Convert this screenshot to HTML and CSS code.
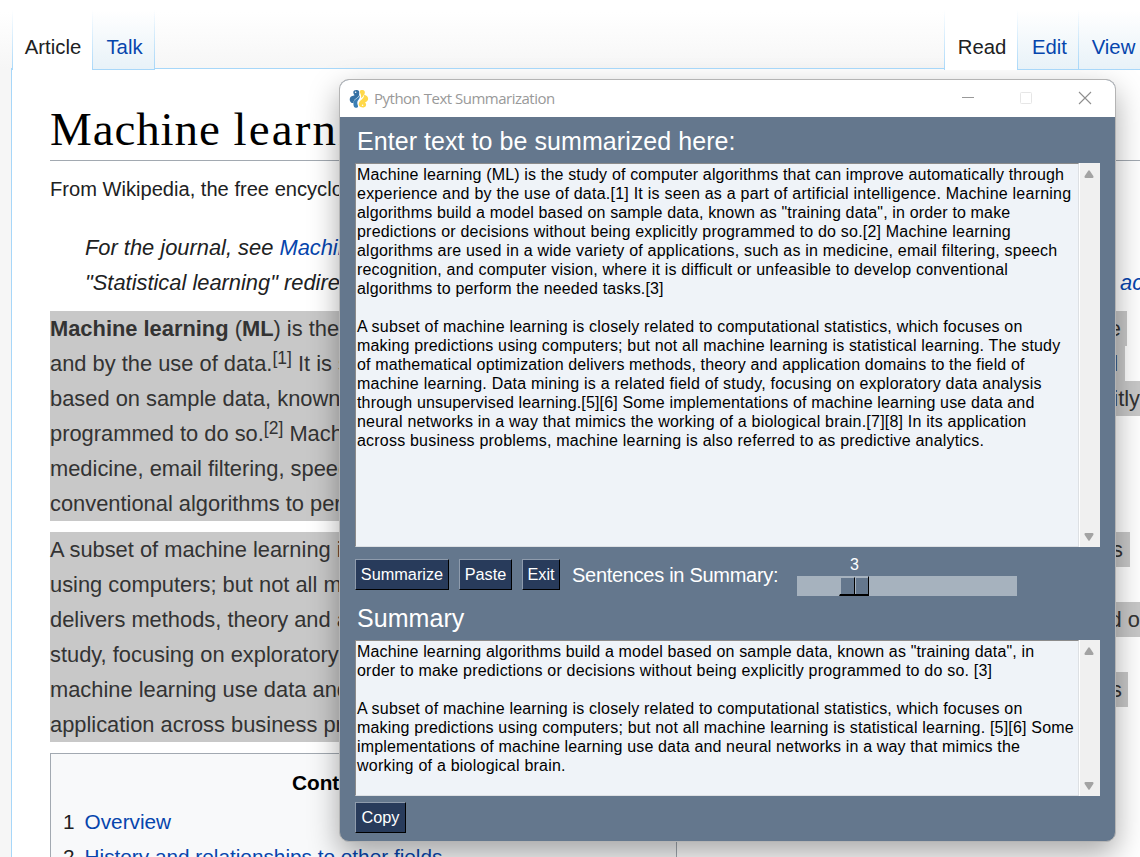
FILE: index.html
```html
<!DOCTYPE html>
<html lang="en">
<head>
<meta charset="utf-8">
<title>Python Text Summarization</title>
<link rel="stylesheet" href="styles.css">
</head>
<body>
<div class="wiki">
  <header class="head">
    <nav class="tabs left">
      <a class="tab active article">Article</a><a class="tab talk">Talk</a>
    </nav>
    <nav class="tabs right">
      <a class="tab active read">Read</a><a class="tab edit">Edit</a><a class="tab view">View</a>
    </nav>
  </header>
  <main class="content">
    <h1 class="title">Machine <span>learning</span></h1>
    <p class="from">From Wikipedia, the free encyclopedia</p>
    <div class="hatnote">
      <div class="row"><span>For the journal, see <a>Machine</a></span></div>
      <div class="row"><span>"Statistical learning" redirects</span><a class="tail-ac">ac</a></div>
    </div>
    <div class="para first">
      <div class="row sel e1"><span><b>Machine learning</b> (<b>ML</b>) is the</span><span>e</span></div>
      <div class="row sel e2"><span>and by the use of data.<sup>[1]</sup> It is s</span><span>l</span></div>
      <div class="row sel full"><span>based on sample data, known</span><span class="itly">itly</span></div>
      <div class="row sel half"><span>programmed to do so.<sup>[2]</sup> Mach</span></div>
      <div class="row sel half"><span>medicine, email filtering, speec</span></div>
      <div class="row sel half"><span>conventional algorithms to perf</span></div>
    </div>
    <div class="para second">
      <div class="row sel e3"><span>A subset of machine learning is</span><span>s</span></div>
      <div class="row sel half"><span>using computers; but not all ma</span></div>
      <div class="row sel full"><span>delivers methods, theory and a</span><span class="do">d o</span></div>
      <div class="row sel half"><span>study, focusing on exploratory</span></div>
      <div class="row sel e4"><span>machine learning use data and</span><span>s</span></div>
      <div class="row sel half"><span>application across business pr</span></div>
    </div>
    <section class="toc">
      <h2>Contents</h2>
      <div class="item"><span>1</span><a>Overview</a></div>
      <div class="item"><span>2</span><a>History and relationships to other fields</a></div>
    </section>
  </main>
</div>

<div class="window">
  <div class="titlebar">
    <svg class="logo" viewBox="0 0 20 20" width="20" height="20">
      <path d="M8.8 1.2c-2.600-.6-4.500.3-4.500 2.100 0 1.200.6 2.200 1.300 3L2 7.400C.3 8.800.3 11.700 1.800 13.200c1 1 2.300 1 2.800.5 0-2 .8-3.100 2.400-4.200C9 8.200 10.200 7.200 10.200 5V3c0-.9-.5-1.500-1.400-1.800z" fill="#3470a3"/>
      <path d="M4.400 14.400c0-2 .9-3.300 2.600-4.400 1.800-1.200 3-2.300 3.600-4 .4 1.600.3 3-.7 4.300-.8 1.100-1.600 2-1.600 3.600 0 1.500.8 2.500.8 3.500-.2 1.300-1.900 1.700-3.200 1.100-1.100-.6-1.500-2-1.500-4.100z" fill="#3b7fb5"/>
      <path d="M11.200 1.500c1.600-.9 3.800-.5 4.400.8.6 1.200.1 2.500-.4 3.600 2 .1 3.700 1.200 3.900 3.300.2 2-1 3.500-3 4.100.9 1.200 1.400 2.500.7 3.700-.9 1.500-3.300 1.900-5.100 1-1.500-.8-2.200-2-1.900-3.600.3-1.900 1.700-3 3.200-4.200 1.700-1.300 2.300-2.700 1.900-4.600-.5 1.800-1.500 2.700-2.900 3.600.3-1.600.1-3-.6-4.600-.5-1.300-.8-2.300-.2-3.100z" fill="#ffd84a"/>
      <circle cx="6.600" cy="3.200" r=".8" fill="#fff"/><circle cx="13.600" cy="16.300" r=".8" fill="#fff"/>
    </svg>
    <span class="caption">Python Text Summarization</span>
    <svg class="controls" viewBox="0 0 130 15" width="130" height="15">
      <path d="M0 6.500h12" stroke="#999" fill="none"/>
      <rect x="58.500" y="1.500" width="11" height="11" rx="1" stroke="#e6e6e6" fill="none"/>
      <path d="M117 1l12 12M129 1l-12 12" stroke="#8e8e8e" fill="none" stroke-width="1.100"/>
    </svg>
  </div>
  <div class="client">
    <div class="label big">Enter text to be summarized here:</div>
    <div class="box input">
      <div class="text">
        <div class="l1">Machine learning (ML) is the study of computer algorithms that can improve automatically through</div>
        <div class="l2">experience and by the use of data.[1] It is seen as a part of artificial intelligence. Machine learning</div>
        <div class="l3">algorithms build a model based on sample data, known as "training data", in order to make</div>
        <div class="l4">predictions or decisions without being explicitly programmed to do so.[2] Machine learning</div>
        <div class="l5">algorithms are used in a wide variety of applications, such as in medicine, email filtering, speech</div>
        <div class="l6">recognition, and computer vision, where it is difficult or unfeasible to develop conventional</div>
        <div class="l7">algorithms to perform the needed tasks.[3]</div>
        <div>&nbsp;</div>
        <div class="l8">A subset of machine learning is closely related to computational statistics, which focuses on</div>
        <div class="l9">making predictions using computers; but not all machine learning is statistical learning. The study</div>
        <div class="l10">of mathematical optimization delivers methods, theory and application domains to the field of</div>
        <div class="l11">machine learning. Data mining is a related field of study, focusing on exploratory data analysis</div>
        <div class="l12">through unsupervised learning.[5][6] Some implementations of machine learning use data and</div>
        <div class="l13">neural networks in a way that mimics the working of a biological brain.[7][8] In its application</div>
        <div class="l14">across business problems, machine learning is also referred to as predictive analytics.</div>
      </div>
      <div class="scroll">
        <svg width="10" height="8" viewBox="0 0 10 7" preserveAspectRatio="none"><path d="M4.200.7Q5-.2 5.800.7L9.300 5.200Q10 7 8.500 7H1.500Q0 7 .7 5.200Z" fill="#a3a3a3"/></svg>
        <svg width="10" height="8" viewBox="0 0 10 7" preserveAspectRatio="none"><path d="M4.200 6.300Q5 7.200 5.800 6.300L9.300 1.800Q10 0 8.500 0H1.500Q0 0 .7 1.800Z" fill="#a3a3a3"/></svg>
      </div>
    </div>
    <div class="tools">
      <button class="btn summarize">Summarize</button>
      <button class="btn paste">Paste</button>
      <button class="btn exit">Exit</button>
      <span class="sentences">Sentences in Summary:</span>
      <div class="slider">
        <div class="value">3</div>
        <div class="track"><div class="thumb"><i></i><i></i></div></div>
      </div>
    </div>
    <div class="label big summary">Summary</div>
    <div class="box output">
      <div class="text">
        <div class="s1">Machine learning algorithms build a model based on sample data, known as "training data", in</div>
        <div class="s2">order to make predictions or decisions without being explicitly programmed to do so. [3]</div>
        <div>&nbsp;</div>
        <div class="s3">A subset of machine learning is closely related to computational statistics, which focuses on</div>
        <div class="s4">making predictions using computers; but not all machine learning is statistical learning. [5][6] Some</div>
        <div class="s5">implementations of machine learning use data and neural networks in a way that mimics the</div>
        <div class="s6">working of a biological brain.</div>
      </div>
      <div class="scroll">
        <svg width="10" height="8" viewBox="0 0 10 7" preserveAspectRatio="none"><path d="M4.200.7Q5-.2 5.800.7L9.300 5.200Q10 7 8.500 7H1.500Q0 7 .7 5.200Z" fill="#a3a3a3"/></svg>
        <svg width="10" height="8" viewBox="0 0 10 7" preserveAspectRatio="none"><path d="M4.200 6.300Q5 7.200 5.800 6.300L9.300 1.800Q10 0 8.500 0H1.500Q0 0 .7 1.800Z" fill="#a3a3a3"/></svg>
      </div>
    </div>
    <button class="btn copy">Copy</button>
  </div>
</div>
</body>
</html>
```
FILE: styles.css
```css
* { box-sizing: border-box; }
html, body { margin: 0; height: 857px; overflow: hidden; }
body { width: 1140px; position: relative; font-family: "Liberation Sans", Arial, sans-serif; color: #202122; }
a { color: #0645ad; }

.wiki { height: 857px; display: flex; flex-direction: column; padding-left: 11px; overflow: hidden;
  background: linear-gradient(#fff 0, #fff 12px, #f6f6f6 69px); white-space: nowrap; }
.head { flex: none; height: 69px; display: flex; justify-content: space-between; border-bottom: 1px solid #a7d7f9; position: relative; z-index: 1; }
.tabs { display: flex; height: 70px; }
.left { padding-left: 1px; }
.tab { font-size: 20.310px; line-height: 24px; padding-top: 35px; text-align: center; color: #0645ad;
  border-right: 1px solid; border-bottom: 1px solid #a7d7f9;
  border-image: linear-gradient(rgba(167,215,249,0) 15%, #a7d7f9) 1;
  background: linear-gradient(#fff 15%, #e8f2f8); }
.tab.active { background: #fff; color: #202122; border-bottom: 0; }
.article { width: 81px; border-left: 1px solid; padding-left: 1px; }
.talk { width: 62px; padding-left: 2px; }
.read { width: 74px; border-left: 1px solid; padding-left: 2px; }
.edit { width: 61px; padding-left: 3px; }
.view { width: 61px; padding-left: 8px; border-right: 0; }

.content { flex: 1; background: #fff; border-left: 1px solid #a7d7f9; padding: 34px 0 0 38px; overflow: hidden; }
.title { margin: 0; height: 58px; border-bottom: 1px solid #a2a9b1; font: 400 47px/52px "Liberation Serif", serif; color: #000; letter-spacing: .9px; }
.title span { letter-spacing: 2.200px; }
.from { margin: 16px 0 0; font-size: 20.125px; line-height: 24px; }
.hatnote { margin-top: 29px; padding-left: 35px; font-style: italic; }
.tail-ac { width: 20px; }
.row { height: 35px; font-size: 21.875px; line-height: 35px; display: flex; justify-content: space-between; }
.para.first { margin-top: 11px; }
.para.second { margin-top: 11px; }
.sel { background: #c8c8c8; color: #333; }
.row sup { font-size: 17.500px; line-height: 1; vertical-align: 7px; }
.e1 { width: 1077px; padding-right: 6px; }
.e2 { width: 1075px; padding-right: 7px; }
.e3 { width: 1080px; padding-right: 7px; }
.e4 { width: 1078px; padding-right: 6px; }
.half { width: 900px; }
.toc { width: 627px; height: 300px; margin-top: 11px; border: 1px solid #a2a9b1; background: #f8f9fa; padding: 12px 12px; font-size: 20.780px; }
.toc h2 { margin: 0; padding-right: 53px; font-size: 20.780px; line-height: 33px; text-align: center; color: #000; }
.item { display: flex; gap: 10px; line-height: 35px; margin-top: 5px; }
.item + .item { margin-top: 0; }

.window { position: absolute; left: 339px; top: 79px; width: 777px; height: 763px; border: 1px solid #b4b4b4; border-radius: 10px;
  overflow: hidden; background: #64778d; background-clip: border-box; box-shadow: 0 12px 30px rgba(0,0,0,.34); display: flex; flex-direction: column; white-space: nowrap; }
.titlebar { flex: none; height: 37px; background: #fff; display: flex; align-items: center; padding: 0 23px 0 9px; }
.caption { font: 15px/20px "Open Sans", sans-serif; color: #999; margin: -2px 0 0 5px; flex: 1; letter-spacing: -.5px; }
.client { flex: 1; padding: 7px 15px 0; color: #fff; display: flex; flex-direction: column; align-items: flex-start; }
.label { font-size: 25px; line-height: 34px; height: 39px; padding-left: 2px; letter-spacing: .06px; }
.box { width: 745px; display: flex; background: #f0f0f0; }
.input { height: 384px; }
.text { width: 724px; background: #eff3f8; color: #000; font-size: 16px; line-height: 19px; padding: 1px 0 0 1px;
  border: 1px solid; border-color: #8b8b8b #dde0e4 #dde0e4 #8b8b8b; }
.l1 { letter-spacing: .168px; }
.l2 { letter-spacing: .235px; }
.l3 { letter-spacing: .148px; }
.l4 { letter-spacing: .2px; }
.l5 { letter-spacing: .212px; }
.l6 { letter-spacing: .185px; }
.l7 { letter-spacing: .167px; }
.l8, .s3 { letter-spacing: .194px; }
.l9 { letter-spacing: .172px; }
.l10 { letter-spacing: .14px; }
.l11 { letter-spacing: .216px; }
.l12 { letter-spacing: .155px; }
.l13 { letter-spacing: .21px; }
.l14 { letter-spacing: .207px; }
.s1 { letter-spacing: .152px; }
.s2 { letter-spacing: .205px; }
.s4 { letter-spacing: .185px; }
.s5 { letter-spacing: .145px; }
.s6 { letter-spacing: .23px; }
.scroll { flex: 1; border-left: 1px solid #fff; display: flex; flex-direction: column; align-items: center; justify-content: space-between; padding: 7px 2px 6px 0; }
.tools { display: flex; height: 58px; align-items: flex-start; padding-top: 12px; }
.btn { height: 31px; padding: 0 0 1px; border: 1px solid; border-color: #8e9bac #000 #000 #8e9bac; background: #283b5b; color: #fff;
  font: 16.300px/27px "Liberation Sans", Arial, sans-serif; text-align: center; }
.summarize { width: 94px; margin-right: 10px; }
.paste { width: 53px; margin-right: 10px; }
.exit { width: 38px; margin-right: 12px; }
.sentences { font-size: 20px; line-height: 32px; width: 225px; letter-spacing: -.29px; }
.slider { width: 220px; margin-top: -5px; }
.value { font-size: 16px; line-height: 21px; height: 22px; padding-left: 53px; }
.track { height: 20px; background: #a6b2be; padding-left: 42px; }
.thumb { width: 30px; height: 20px; display: flex; border: 1px solid; border-color: #a6b2be #000 #000 #a6b2be; border-bottom-width: 2px; }
.thumb i { flex: 1; background: #64778d; border-top: 1px solid #a6b2be; border-left: 1px solid #a6b2be; }
.thumb i:first-child { border-right: 1px solid #000; }
.summary { height: 35px; line-height: 26px; }
.output { height: 156px; }
.copy { width: 51px; margin-top: 6px; }
```
